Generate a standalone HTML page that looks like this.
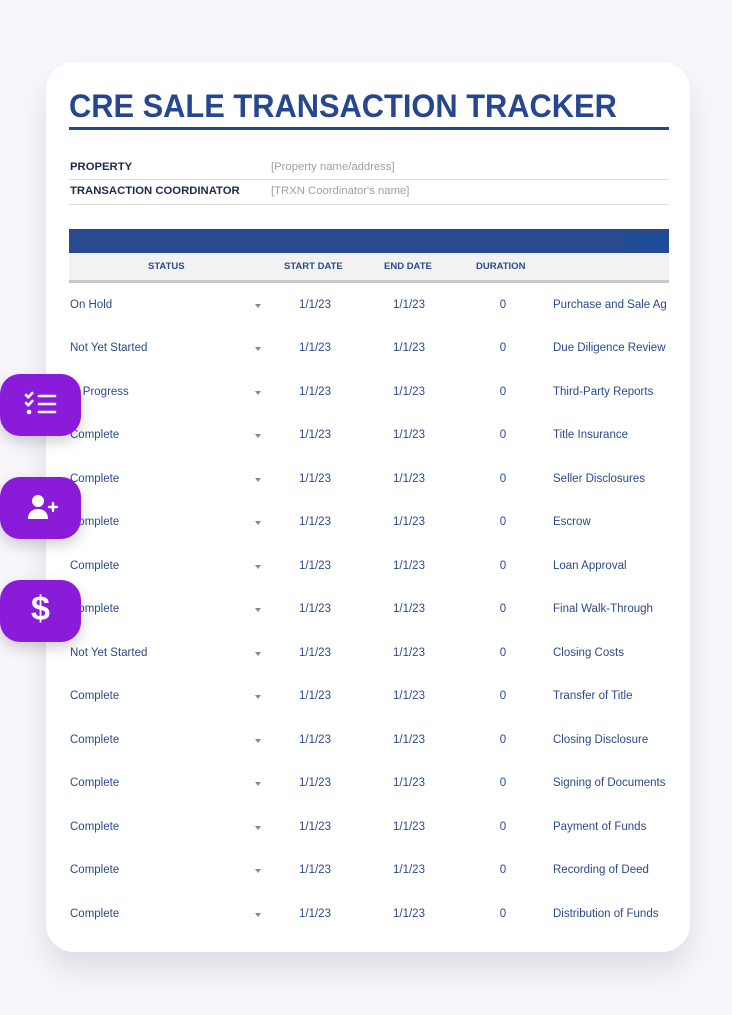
<!DOCTYPE html>
<html><head><meta charset="utf-8"><style>
*{margin:0;padding:0;box-sizing:border-box}
body{width:732px;height:1015px;background:#f8f6fc;font-family:"Liberation Sans",sans-serif;position:relative;overflow:hidden}
.card{position:absolute;left:46px;top:62px;width:644px;height:890px;background:#fff;border-radius:28px;box-shadow:0 18px 30px rgba(0,0,0,0.10)}
.t{position:absolute;white-space:nowrap}
h1{position:absolute;left:69px;top:88px;font-size:32px;font-weight:900;color:#264790;font-family:"Liberation Sans",sans-serif;transform:scaleX(0.963);transform-origin:left}
.rule{position:absolute;left:69px;top:127px;width:600px;height:3px;background:#264790}
.lab{font-size:11.3px;font-weight:bold;color:#1e2a4a}
.ph{font-size:11.3px;color:#a0a0a0}
.hl{position:absolute;left:69px;width:600px;height:1px;background:#dcdcdc}
.row{font-size:11.5px;color:#2b4a8a}
.hd{font-size:9.5px;font-weight:bold;color:#2b4a8a}
.arr{position:absolute;width:0;height:0;border-left:3.5px solid transparent;border-right:3.5px solid transparent;border-top:4px solid #888}
.btn{position:absolute;left:0;width:81px;height:62px;background:#8a1bd8;border-radius:20px;box-shadow:0 6px 14px rgba(0,0,0,0.18)}
.c{text-align:center;width:60px}
</style></head><body>
<div class="card"></div>
<h1>CRE SALE TRANSACTION TRACKER</h1>
<div class="rule"></div>
<div class="t lab" style="left:70px;top:161px">PROPERTY</div>
<div class="t ph" style="left:271px;top:161px">[Property name/address]</div>
<div class="hl" style="top:179px"></div>
<div class="t lab" style="left:70px;top:185px">TRANSACTION COORDINATOR</div>
<div class="t ph" style="left:271px;top:185px">[TRXN Coordinator's name]</div>
<div class="hl" style="top:204px"></div>
<div style="position:absolute;left:69px;top:229px;width:600px;height:24px;background:#284a8f"></div>
<div style="position:absolute;left:626px;top:233px;width:43px;height:16px;background:#1f4c96"></div>
<div style="position:absolute;left:69px;top:253px;width:600px;height:27px;background:#f2f2f2"></div>
<div style="position:absolute;left:69px;top:280px;width:600px;height:3px;background:#c8c8c8"></div>
<div class="t hd" style="left:148px;top:261px">STATUS</div>
<div class="t hd" style="left:284px;top:261px">START DATE</div>
<div class="t hd" style="left:384px;top:261px">END DATE</div>
<div class="t hd" style="left:476px;top:261px">DURATION</div>
<div id="rows"></div>
<div class="btn" style="top:374px"><svg width="81" height="62" viewBox="0 0 81 62"><g fill="none" stroke="#fff" stroke-width="2.6" stroke-linecap="round" stroke-linejoin="round"><path d="M26 21l2.3 2.3 4-4.3M26 29l2.3 2.3 4-4.3"/><path d="M39 22h16M39 30h16M39 38h16"/></g><circle cx="29" cy="38" r="2.3" fill="#fff"/></svg></div>
<div class="btn" style="top:477px"><svg width="81" height="62" viewBox="0 0 81 62"><circle cx="38" cy="24" r="6" fill="#fff"/><path d="M28 42c0-7 4.5-10 10-10s10 3 10 10z" fill="#fff"/><path d="M53 26v8M49 30h8" stroke="#fff" stroke-width="2.4" stroke-linecap="round"/></svg></div>
<div class="btn" style="top:580px"><div class="t" style="left:0;width:81px;text-align:center;top:10px;font-size:34px;color:#fff;font-weight:bold">$</div></div>
<script>
var s=["On Hold","Not Yet Started","In Progress","Complete","Complete","Complete","Complete","Complete","Not Yet Started","Complete","Complete","Complete","Complete","Complete","Complete"];
var k=["Purchase and Sale Ag","Due Diligence Review","Third-Party Reports","Title Insurance","Seller Disclosures","Escrow","Loan Approval","Final Walk-Through","Closing Costs","Transfer of Title","Closing Disclosure","Signing of Documents","Payment of Funds","Recording of Deed","Distribution of Funds"];
var h="";
for(var i=0;i<15;i++){var y=298.5+i*43.5;
h+='<div class="t row" style="left:70px;top:'+y+'px">'+s[i]+'</div>';
h+='<div class="arr" style="left:255px;top:'+(y+5)+'px"></div>';
h+='<div class="t row c" style="left:285px;top:'+y+'px">1/1/23</div>';
h+='<div class="t row c" style="left:379px;top:'+y+'px">1/1/23</div>';
h+='<div class="t row c" style="left:473px;top:'+y+'px">0</div>';
h+='<div class="t row" style="left:553px;top:'+y+'px;width:116px;overflow:hidden">'+k[i]+'</div>';}
document.getElementById("rows").innerHTML=h;
</script>
</body></html>
